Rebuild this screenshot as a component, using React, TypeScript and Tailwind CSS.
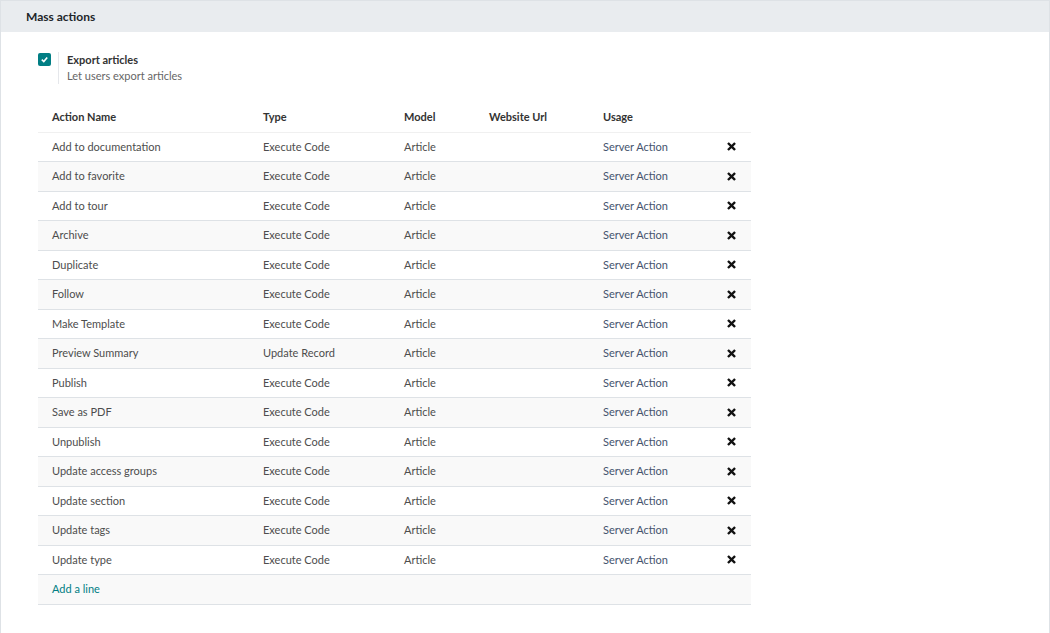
import React from 'react';

const rows: [string, string][] = [
  ['Add to documentation', 'Execute Code'],
  ['Add to favorite', 'Execute Code'],
  ['Add to tour', 'Execute Code'],
  ['Archive', 'Execute Code'],
  ['Duplicate', 'Execute Code'],
  ['Follow', 'Execute Code'],
  ['Make Template', 'Execute Code'],
  ['Preview Summary', 'Update Record'],
  ['Publish', 'Execute Code'],
  ['Save as PDF', 'Execute Code'],
  ['Unpublish', 'Execute Code'],
  ['Update access groups', 'Execute Code'],
  ['Update section', 'Execute Code'],
  ['Update tags', 'Execute Code'],
  ['Update type', 'Execute Code'],
];

const cols = 'grid grid-cols-[212px_141px_85px_114px_125px_35px]';

function CloseIcon() {
  return (
    <svg width="9" height="9" viewBox="0 0 10 10" className="mx-auto">
      <path d="M2 2L8 8M8 2L2 8" stroke="#111" strokeWidth="2.6" strokeLinecap="square" />
    </svg>
  );
}

export default function App() {
  return (
    <div
      className="w-[1050px] h-[633px] bg-white border-l border-r border-t border-[#dee2e6] text-[11px] text-[#4d4d4d]"
      style={{ fontFamily: 'Lato, "Noto Sans", sans-serif' }}
    >
      {/* Section header */}
      <div className="h-[31px] bg-[#e9ecef] flex items-center px-[25px]">
        <span className="font-bold text-[12px] text-[#212529]">Mass actions</span>
      </div>

      <div className="pl-[37px] pt-[20px]">
        {/* Setting */}
        <div className="flex">
          <div className="pt-[1px] w-[20px]">
            <div className="w-[13px] h-[13px] rounded-[2px] bg-[#017e84] flex items-center justify-center">
              <svg width="9" height="9" viewBox="0 0 10 10">
                <path d="M2 5.2L4.2 7.2L8 2.8" stroke="white" strokeWidth="1.8" fill="none" />
              </svg>
            </div>
          </div>
          <div className="border-l border-[#e5e7eb] pl-[8px] leading-[16px]">
            <div className="font-bold text-[#333]">Export articles</div>
            <div className="text-[#666]">Let users export articles</div>
          </div>
        </div>

        {/* Table */}
        <div className="w-[713px] mt-[19px]">
          <div className={`${cols} h-[29.5px] items-center border-b border-[#f0f0f0] font-bold text-[#333]`}>
            <div className="pl-[14px]">Action Name</div>
            <div className="pl-[13px]">Type</div>
            <div className="pl-[13px]">Model</div>
            <div className="pl-[13px]">Website Url</div>
            <div className="pl-[13px]">Usage</div>
            <div />
          </div>
          {rows.map(([name, type], i) => (
            <div
              key={name}
              className={`${cols} h-[29.5px] items-center border-b border-[#dee2e6] ${i % 2 === 1 ? 'bg-[#f9f9f9]' : 'bg-white'}`}
            >
              <div className="pl-[14px]">{name}</div>
              <div className="pl-[13px]">{type}</div>
              <div className="pl-[13px]">Article</div>
              <div className="pl-[13px]" />
              <div className="pl-[13px] text-[#45546e]">Server Action</div>
              <div className="flex items-center pr-[2px]">
                <CloseIcon />
              </div>
            </div>
          ))}
          <div className="h-[29.5px] flex items-center border-b border-[#dee2e6] bg-[#f9f9f9] pl-[14px] text-[#017e84]">
            Add a line
          </div>
        </div>
      </div>
    </div>
  );
}
